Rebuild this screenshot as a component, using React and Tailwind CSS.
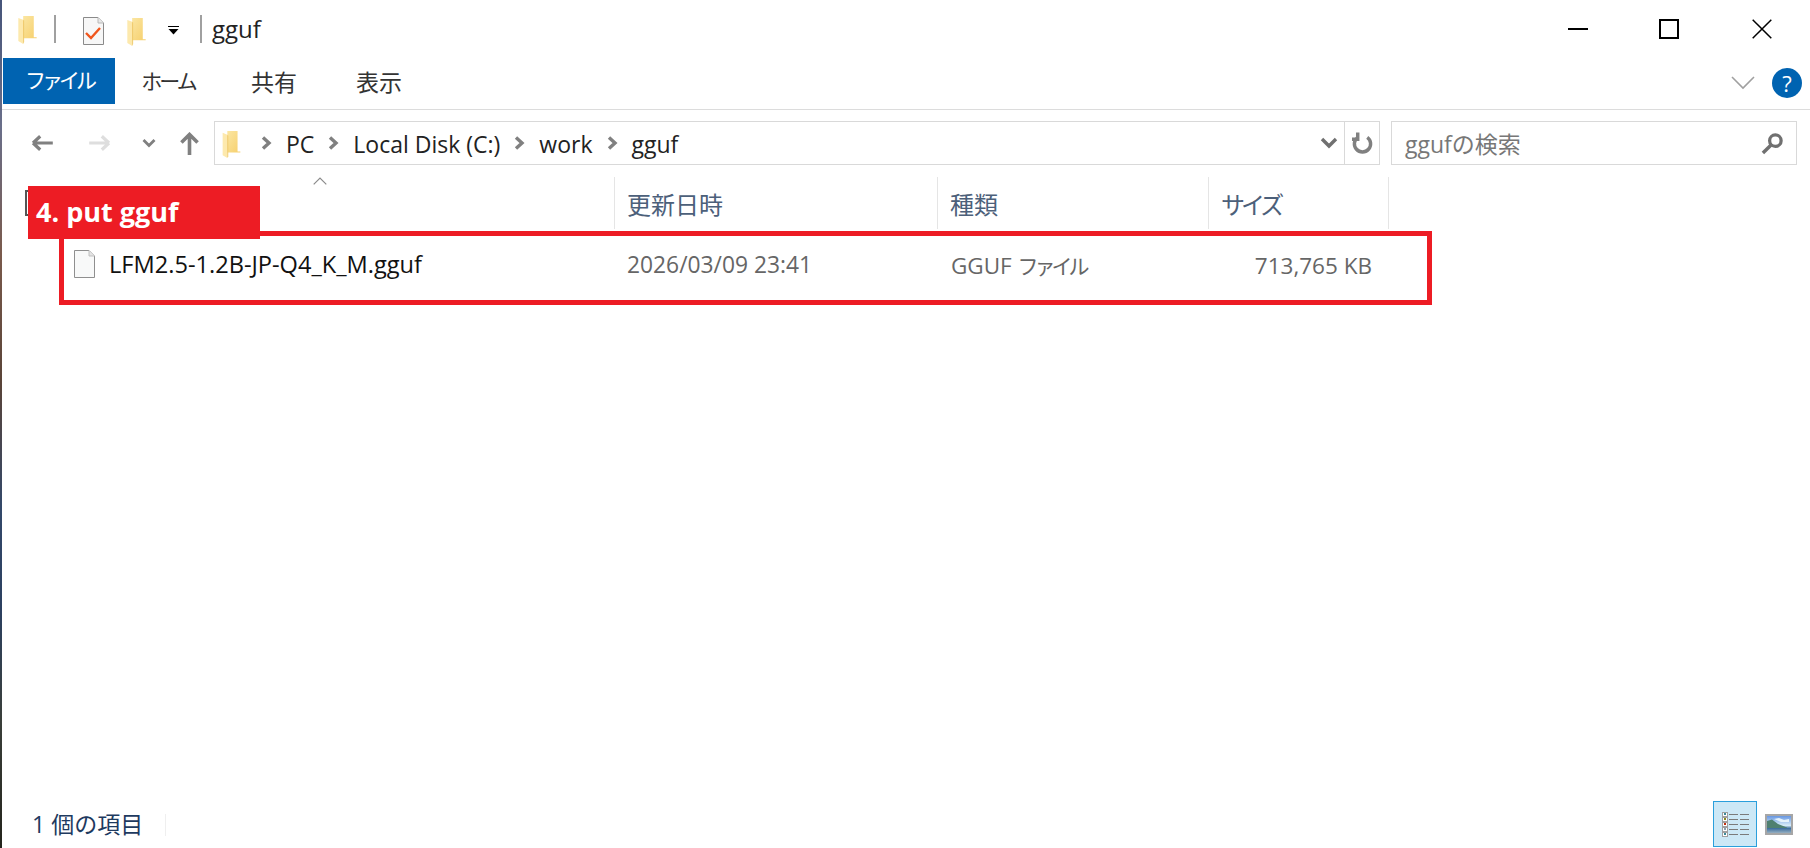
import React from "react";

function Folder({ className }) {
  return (
    <svg viewBox="0 0 19 29" className={className}>
      <defs>
        <linearGradient id="fg" x1="0" y1="0" x2="1" y2="1">
          <stop offset="0" stopColor="#fbe6a2" />
          <stop offset="1" stopColor="#f6cf6c" />
        </linearGradient>
      </defs>
      <path d="M5 0H16V22H19V23H5Z" fill="url(#fg)" />
      <path d="M0 2L5 4V29L0 26Z" fill="#fde9ad" />
      <path d="M5 4V29L6 27V5Z" fill="#eec766" />
    </svg>
  );
}

function Sep() {
  return (
    <svg viewBox="0 0 11 14" className="w-[11px] h-[14px] block">
      <path d="M2 1.500L8 7L2 12.500" fill="none" stroke="#808080" strokeWidth="3.400" />
    </svg>
  );
}

function Col({ w, children, className = "" }) {
  return (
    <div className={`h-[52px] border-r border-[#e5e5e5] pl-[12px] pt-[3px] flex items-center shrink-0 ${w}`}>
      <span className={`text-[24px] text-[#4c607a] ${className}`}>{children}</span>
    </div>
  );
}

export default function App() {
  return (
    <div
      className="w-[1810px] h-[848px] overflow-hidden bg-white flex text-[#1a1a1a]"
      style={{ fontFamily: '"Open Sans","Noto Sans CJK JP",sans-serif' }}
    >
      <div className="w-[2px] h-full shrink-0 bg-[linear-gradient(to_bottom,#46557a_0%,#6a6f8a_15%,#7a5a4c_30%,#5a4438_45%,#33486a_60%,#2c4060_72%,#3a3f3a_85%,#24241c_100%)]" />
      <div className="flex-1 min-w-0 flex flex-col">
        {/* Title bar */}
        <div className="h-[58px] flex items-center shrink-0 relative">
          <Folder className="w-[19px] h-[28px] ml-[16px] mt-[2px]" />
          <div className="w-[2px] h-[28px] bg-[#a0a0a0] ml-[17px]" />
          <svg viewBox="0 0 21 28" className="w-[21px] h-[28px] ml-[27px] mt-[3px]">
            <path d="M.5.5H15L20.500 6V27.500H.5Z" fill="#f7f7f7" stroke="#8a8a8a" />
            <path d="M15 .5V6H20.500" fill="#e8e8e8" stroke="#b8b8b8" />
            <path d="M3 16L8 21L17 11" fill="none" stroke="#f0561d" strokeWidth="2.400" />
          </svg>
          <Folder className="w-[19px] h-[28px] ml-[23px] mt-[5px]" />
          <svg viewBox="0 0 11 9" className="w-[11px] h-[9px] ml-[22px] mt-[2px]">
            <rect x="0" y="0" width="11" height="1" fill="#000" />
            <path d="M.5 3H10.500L5.500 8.500Z" fill="#000" />
          </svg>
          <div className="w-[2px] h-[28px] bg-[#a0a0a0] ml-[21px]" />
          <span className="ml-[10px] text-[24px] leading-none text-[#222]">gguf</span>
          <div className="ml-auto flex items-center mr-[38px]">
            <svg viewBox="0 0 20 2" className="w-[20px] h-[2px]"><rect width="20" height="2" fill="#000" /></svg>
            <svg viewBox="0 0 20 20" className="w-[20px] h-[20px] ml-[71px]"><rect x="1" y="1" width="18" height="18" fill="none" stroke="#000" strokeWidth="2" /></svg>
            <svg viewBox="0 0 20 20" className="w-[20px] h-[20px] ml-[73px]"><path d="M.7.7L19.300 19.300M19.300.7L.7 19.300" stroke="#000" strokeWidth="1.500" /></svg>
          </div>
        </div>

        {/* Ribbon tabs */}
        <div className="h-[52px] shrink-0 flex items-start border-b border-[#dcdcdc] pl-[1px]">
          <div className="w-[112px] h-[46px] bg-[#0063b1] text-white text-[21px] tracking-[-4px] flex items-center justify-center">ファイル</div>
          <div className="w-[106px] h-[46px] pt-[2px] text-[21px] tracking-[-3px] flex items-center justify-center text-[#333]">ホーム</div>
          <div className="w-[106px] h-[46px] pt-[2px] text-[23px] flex items-center justify-center text-[#333]">共有</div>
          <div className="w-[104px] h-[46px] pt-[2px] text-[23px] flex items-center justify-center text-[#333]">表示</div>
          <div className="ml-auto flex items-center h-[46px] mt-[2px] mr-[8px]">
            <svg viewBox="0 0 24 14" className="w-[24px] h-[14px]">
              <path d="M1 1L12 12L23 1" fill="none" stroke="#a0a0a0" strokeWidth="1.600" />
            </svg>
            <div className="w-[30px] h-[30px] rounded-full bg-[#0063b1] text-white text-[22px] leading-none flex items-center justify-center ml-[17px]">?</div>
          </div>
        </div>

        {/* Address row */}
        <div className="h-[68px] shrink-0 flex items-start pt-[11px]">
          <div className="flex items-center h-[44px] pl-[29px] w-[212px] shrink-0">
            <svg viewBox="0 0 24 20" className="w-[22px] h-[18px]">
              <path d="M2 10L10 2.500M2 10L10 17.500M2.500 10H24" fill="none" stroke="#808080" strokeWidth="3.600" />
            </svg>
            <svg viewBox="0 0 24 20" className="w-[22px] h-[18px] ml-[36px]">
              <path d="M22 10L14 2.500M22 10L14 17.500M21.500 10H0" fill="none" stroke="#dedede" strokeWidth="3.600" />
            </svg>
            <svg viewBox="0 0 14 10" className="w-[14px] h-[10px] ml-[31px]">
              <path d="M1.500 2L7 7.500L12.500 2" fill="none" stroke="#808080" strokeWidth="2.800" />
            </svg>
            <svg viewBox="0 0 20 24" className="w-[19px] h-[23px] ml-[24px]">
              <path d="M1.500 11L10 2.500L18.500 11M10 3V24" fill="none" stroke="#808080" strokeWidth="3.800" />
            </svg>
          </div>
          <div className="w-[1166px] h-[44px] border border-[#d9d9d9] flex items-center shrink-0">
            <Folder className="w-[19px] h-[27px] ml-[7px] mt-[3px]" />
            <div className="ml-[20px]"><Sep /></div>
            <span className="ml-[14px] text-[23px] text-[#222] pt-[2px]">PC</span>
            <div className="ml-[14px]"><Sep /></div>
            <span className="ml-[14px] text-[23px] text-[#222] pt-[2px]">Local Disk (C:)</span>
            <div className="ml-[14px]"><Sep /></div>
            <span className="ml-[14px] text-[23px] text-[#222] pt-[2px]">work</span>
            <div className="ml-[14px]"><Sep /></div>
            <span className="ml-[14px] text-[23px] text-[#222] pt-[2px]">gguf</span>
            <svg viewBox="0 0 18 12" className="w-[18px] h-[12px] ml-auto mr-[6px]">
              <path d="M2 2L9 9L16 2" fill="none" stroke="#707070" strokeWidth="3.400" />
            </svg>
            <div className="w-[35px] h-full border-l border-[#d9d9d9] flex items-center justify-center">
              <svg viewBox="0 0 22 24" className="w-[21px] h-[24px]">
                <path d="M6 6A8.500 8.500 0 1 0 16 6M6 1V8H0" fill="none" stroke="#808080" strokeWidth="3.600" />
              </svg>
            </div>
          </div>
          <div className="ml-[11px] w-[406px] h-[44px] border border-[#d9d9d9] flex items-center pl-[13px] shrink-0">
            <span className="text-[23px] text-[#777] pt-[2px]">ggufの検索</span>
            <svg viewBox="0 0 24 24" className="w-[23px] h-[23px] ml-auto mr-[12px]">
              <circle cx="15" cy="9" r="6" fill="none" stroke="#707070" strokeWidth="3.400" />
              <path d="M10.500 13.500L2 22" stroke="#707070" strokeWidth="3.600" />
            </svg>
          </div>
        </div>

        {/* Column header */}
        <div className="h-[52px] shrink-0 flex relative mt-[-1px]">
          <div className="w-[613px] h-[52px] border-r border-[#e5e5e5] shrink-0 relative">
            <svg viewBox="0 0 14 8" className="absolute left-[311px] top-[0px] w-[14px] h-[8px]">
              <path d="M.7 7.300L7 1L13.300 7.300" fill="none" stroke="#8a8a8a" strokeWidth="1.200" />
            </svg>
            <div className="absolute left-[23px] top-[13px] w-[12px] h-[26px] border-2 border-[#555]" />
          </div>
          <Col w="w-[323px]">更新日時</Col>
          <Col w="w-[271px]">種類</Col>
          <Col w="w-[180px]" className="tracking-[-4px]">サイズ</Col>
          {/* Annotation label */}
          <div className="absolute left-[26px] top-[9px] z-10 w-[232px] h-[53px] bg-[#ed1c24] text-white font-bold text-[27px] flex items-center pl-[8px] pb-[2px] leading-none">
            4. put gguf
          </div>
        </div>

        {/* File row */}
        <div className="relative h-[74px] shrink-0 mt-[2px] ml-[57px] w-[1373px] border-[5px] border-[#ed1c24] flex items-center">
          <svg viewBox="0 0 21 28" className="w-[21px] h-[28px] ml-[10px] mb-[8px] shrink-0">
            <path d="M.5.5H15L20.500 6V27.500H.5Z" fill="#f8f9f9" stroke="#8f8f8f" />
            <path d="M15 .5V6H20.500" fill="#e4e4e4" stroke="#c0c0c0" />
          </svg>
          <span className="ml-[14px] w-[518px] shrink-0 text-[23.600px] text-[#111] mb-[6px] whitespace-nowrap">LFM2.5-1.2B-JP-Q4_K_M.gguf</span>
          <span className="w-[324px] shrink-0 text-[22.800px] text-[#666] mb-[5px] whitespace-nowrap">2026/03/09 23:41</span>
          <span className="w-[200px] shrink-0 text-[22.500px] text-[#666] mb-[5px] whitespace-nowrap">GGUF <span className="tracking-[-4px] text-[21px]">ファイル</span></span>
          <span className="w-[221px] shrink-0 text-[22.500px] text-[#666] text-right mb-[5px] whitespace-nowrap">713,765 KB</span>
        </div>

        <div className="flex-1" />

        {/* Status bar */}
        <div className="h-[46px] shrink-0 flex items-center relative">
          <span className="ml-[30px] text-[23px] text-[#1e3a5f] mb-[2px]">1 個の項目</span>
          <div className="w-[1px] h-[22px] bg-[#efefef] ml-[22px]" />
          <div className="ml-auto flex items-center mr-[17px] mb-[2px]">
            <div className="w-[44px] h-[46px] bg-[#cce8f6] border border-[#2a9fdc] flex flex-col items-center justify-center gap-[1px]">
              {["#3b8b9a", "#8a8a20", "#c03010", "#88a0b0", "#3b8b9a"].map((c, i) => (
                <div key={i} className="flex items-center gap-[1px] h-[4px]">
                  <div className="w-[6px] h-[5px] border border-[#a0a0a0] bg-white flex items-center justify-center">
                    <div className="w-[2px] h-[2px]" style={{ backgroundColor: c }} />
                  </div>
                  <div className="w-[9px] h-[1px] bg-[#7a7a7a]" />
                  <div className="w-[9px] h-[1px] bg-[#7a7a7a] ml-[1px]" />
                </div>
              ))}
            </div>
            <svg viewBox="0 0 28 21" className="w-[28px] h-[21px] ml-[8px]">
              <defs>
                <linearGradient id="sky" x1="0" y1="0" x2="0" y2="1">
                  <stop offset="0" stopColor="#5b8ee0" />
                  <stop offset="0.55" stopColor="#d8ecf8" />
                  <stop offset="0.7" stopColor="#3d6e9e" />
                  <stop offset="1" stopColor="#a8bcc8" />
                </linearGradient>
              </defs>
              <rect x="1" y="1" width="26" height="19" fill="url(#sky)" stroke="#a6a6a6" strokeWidth="2" />
              <path d="M2 7L7 5.500L13 10L22 13.500V14H2Z" fill="#4f8070" />
              <path d="M9 5L14 4L19 6L24 5V8L16 8Z" fill="#e6f3fb" />
            </svg>
          </div>
        </div>
      </div>
    </div>
  );
}
